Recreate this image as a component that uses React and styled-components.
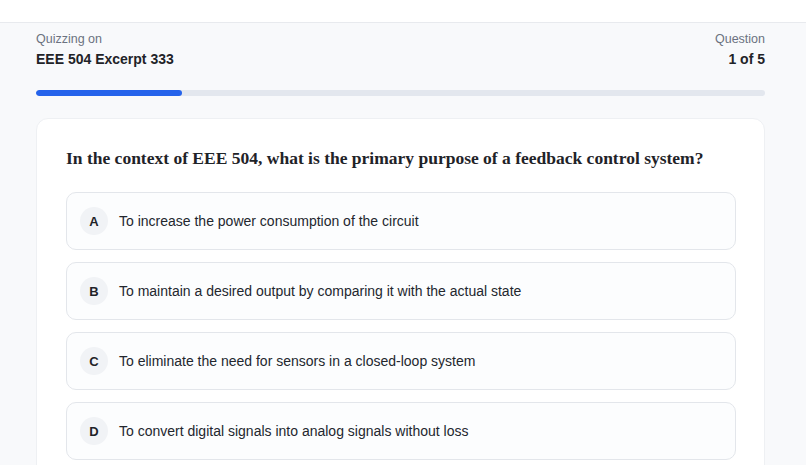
import React from "react";
import styled, { createGlobalStyle } from "styled-components";

const Global = createGlobalStyle`
  html, body { margin: 0; padding: 0; background: #f8f9fb; }
  body { font-family: "Liberation Sans", Arial, sans-serif; color: #111827; }
  * { box-sizing: border-box; }
`;

const TopBar = styled.div`
  height: 23px;
  background: #ffffff;
  border-bottom: 1px solid #e8eaee;
`;

const Main = styled.main`
  padding: 8px 41px 0 36px;
`;

const Header = styled.div`
  display: flex;
  justify-content: space-between;
  align-items: flex-start;
`;

const Meta = styled.div`
  display: flex;
  flex-direction: column;
  gap: 3px;
  text-align: ${(p) => (p.$right ? "right" : "left")};
`;

const Label = styled.span`
  font-size: 12.5px;
  color: #6b7280;
  line-height: 16px;
`;

const Value = styled.span`
  font-size: 14px;
  font-weight: 700;
  color: #1f2328;
  line-height: 18px;
`;

const Track = styled.div`
  margin-top: 22px;
  height: 6px;
  border-radius: 3px;
  background: #e3e7ee;
  overflow: hidden;
`;

const Fill = styled.div`
  height: 100%;
  background: #2563eb;
  border-radius: 3px;
`;

const Card = styled.section`
  margin-top: 22px;
  background: #ffffff;
  border: 1px solid #eef0f3;
  border-radius: 12px;
  padding: 27px 28px 20px 29px;
`;

const Question = styled.h2`
  margin: 0 0 22px 0;
  font-family: "Liberation Serif", "Times New Roman", serif;
  font-size: 17.5px;
  font-weight: 700;
  line-height: 24px;
  color: #1f2328;
`;

const Options = styled.div`
  display: flex;
  flex-direction: column;
  gap: 12px;
`;

const Option = styled.button`
  display: flex;
  align-items: center;
  gap: 11px;
  height: 58px;
  padding: 0 13px;
  background: #fcfdfe;
  border: 1.5px solid #e3e6eb;
  border-radius: 10px;
  text-align: left;
  font-family: inherit;
  cursor: pointer;
`;

const Badge = styled.span`
  width: 28px;
  height: 28px;
  border-radius: 50%;
  background: #f1f3f6;
  display: flex;
  align-items: center;
  justify-content: center;
  font-size: 13px;
  font-weight: 700;
  color: #1f2328;
  flex-shrink: 0;
`;

const OptionText = styled.span`
  font-size: 14px;
  color: #23272e;
`;

const options = [
  ["A", "To increase the power consumption of the circuit"],
  ["B", "To maintain a desired output by comparing it with the actual state"],
  ["C", "To eliminate the need for sensors in a closed-loop system"],
  ["D", "To convert digital signals into analog signals without loss"],
];

export default function App() {
  const progress = 20;
  return (
    <>
      <Global />
      <TopBar />
      <Main>
        <Header>
          <Meta>
            <Label>Quizzing on</Label>
            <Value>EEE 504 Excerpt 333</Value>
          </Meta>
          <Meta $right>
            <Label>Question</Label>
            <Value>1 of 5</Value>
          </Meta>
        </Header>
        <Track>
          <Fill style={{ width: `${progress}%` }} />
        </Track>
        <Card>
          <Question>
            In the context of EEE 504, what is the primary purpose of a feedback control system?
          </Question>
          <Options>
            {options.map(([l, t]) => (
              <Option key={l}>
                <Badge>{l}</Badge>
                <OptionText>{t}</OptionText>
              </Option>
            ))}
          </Options>
        </Card>
      </Main>
    </>
  );
}
